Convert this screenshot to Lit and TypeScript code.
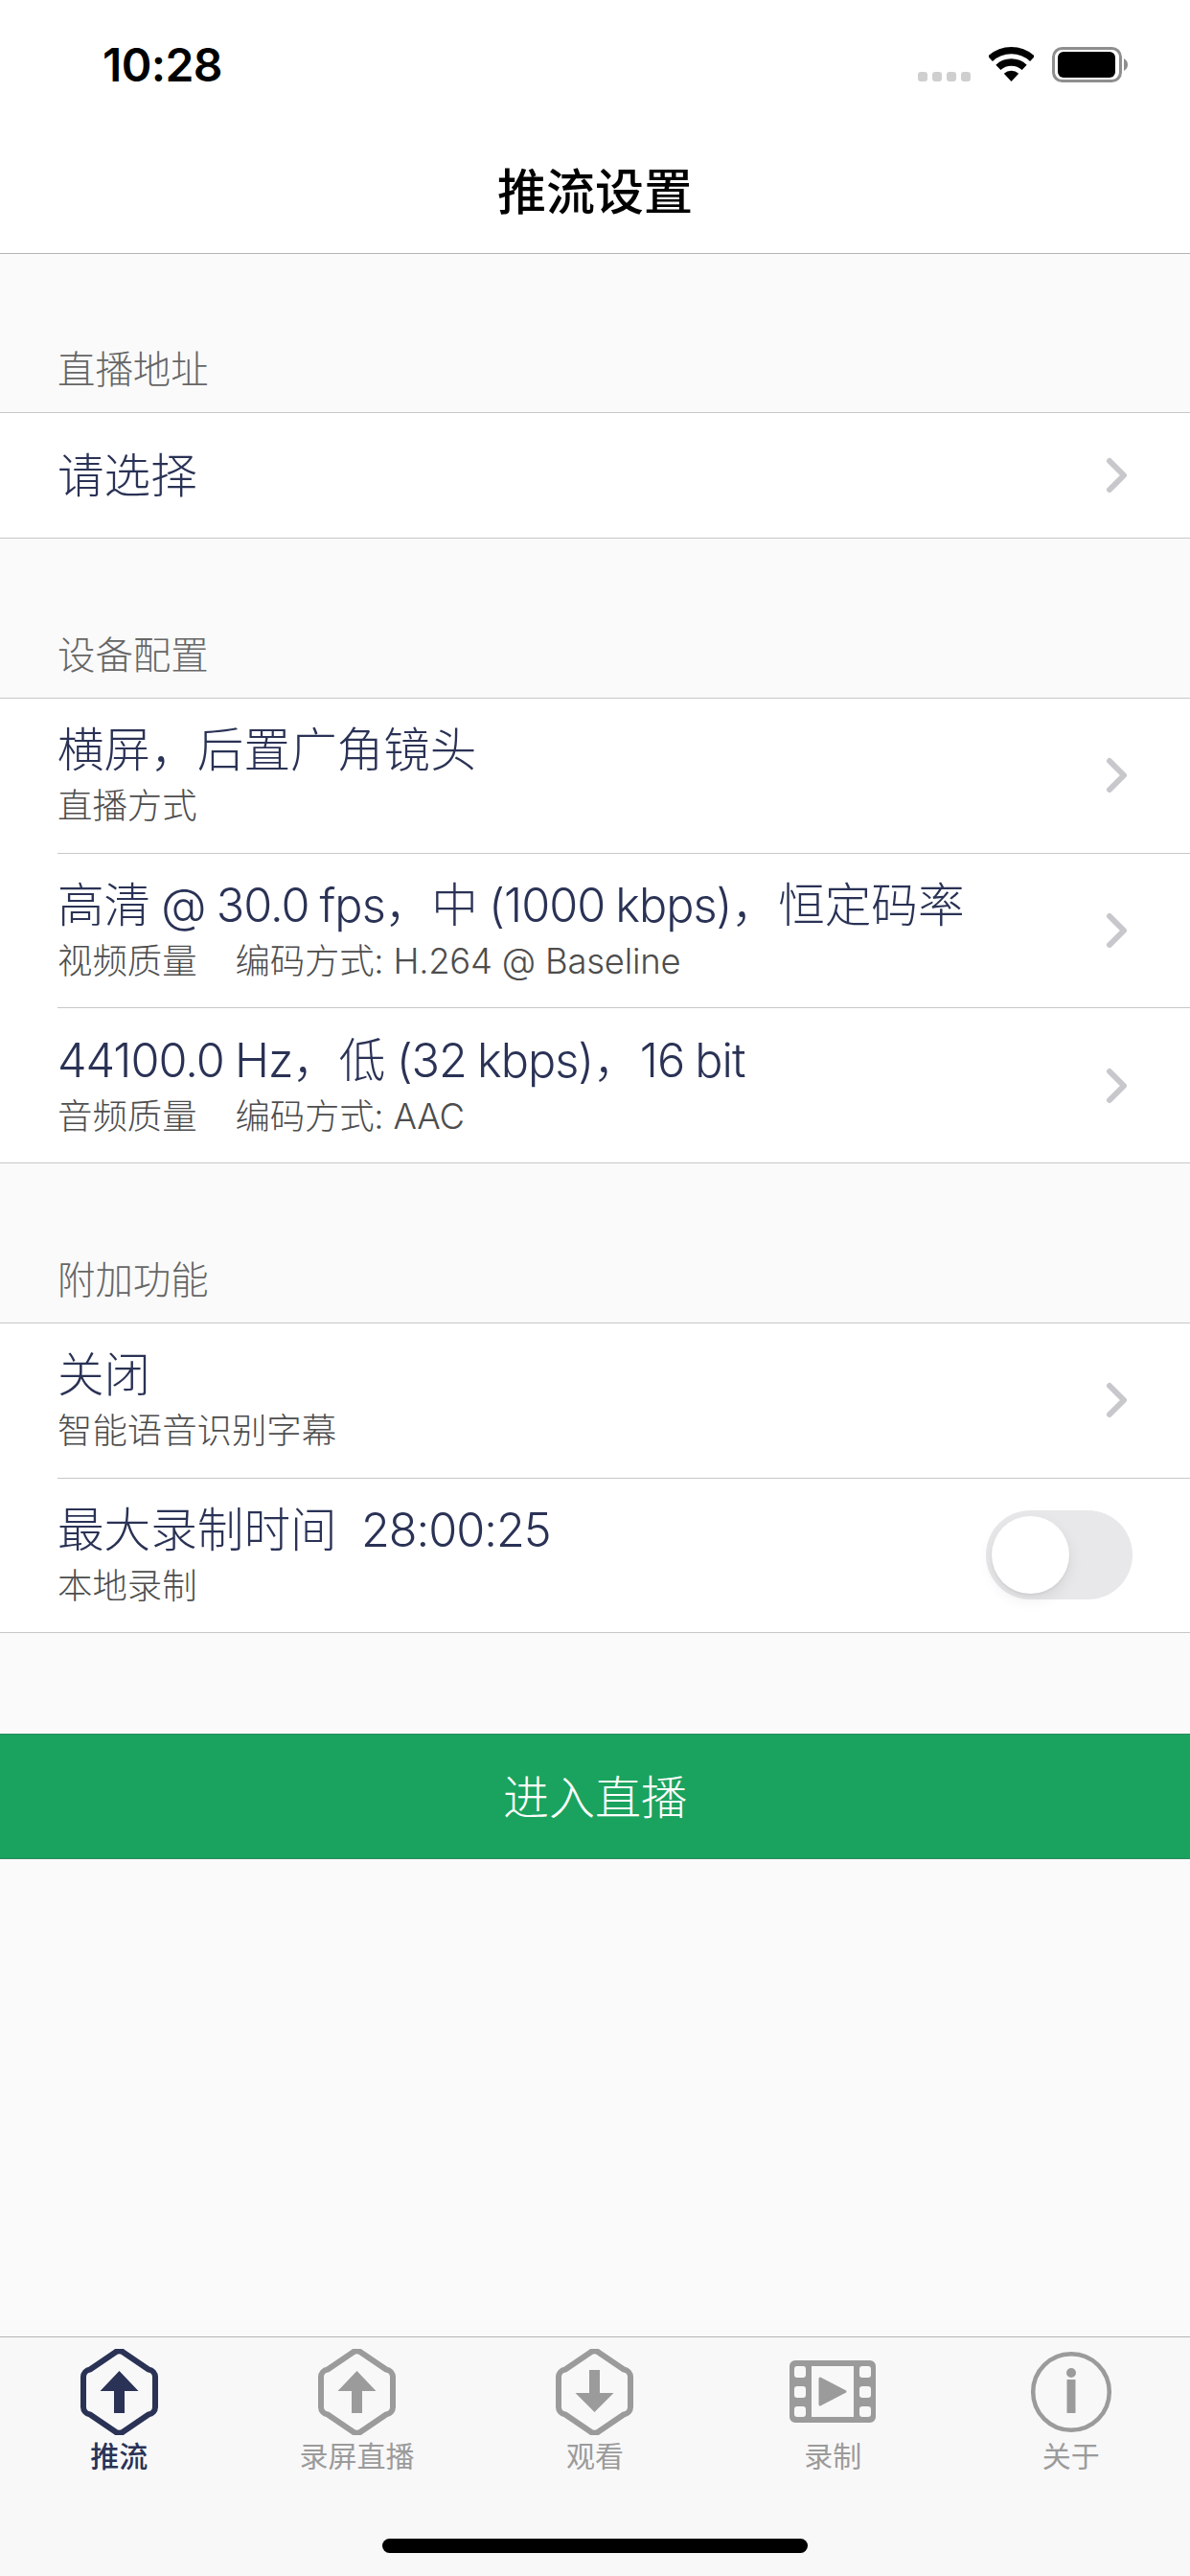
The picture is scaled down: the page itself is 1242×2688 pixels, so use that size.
import { LitElement, html, css, svg } from "lit";
import { customElement } from "lit/decorators.js";

const chevron = html`<svg class="chev" viewBox="0 0 24 38"><path d="M4 4 L19 19 L4 34" fill="none" stroke="#c7c7cc" stroke-width="6" stroke-linecap="round" stroke-linejoin="round"/></svg>`;

const hex = svg`<path d="M36.5 3.4 a8 8 0 0 1 8 0 L71 21.5 a8 8 0 0 1 7 8 V60.5 a8 8 0 0 1-7 8 L44.5 86.6 a8 8 0 0 1-8 0 L10 68.5 a8 8 0 0 1-7-8 V29.5 a8 8 0 0 1 7-8 Z" fill="none" stroke="currentColor" stroke-width="6" stroke-linejoin="round"/>`;

const icons = {
  up: html`<svg class="ico" width="81" height="90" viewBox="0 0 81 90">${hex}<path d="M40.5 23 L60.5 44 H46 V67 H35 V44 H20.5 Z" fill="currentColor"/></svg>`,
  down: html`<svg class="ico" width="81" height="90" viewBox="0 0 81 90">${hex}<path d="M35 22 H46 V46 H60.5 L40.5 66 L20.5 46 H35 Z" fill="currentColor"/></svg>`,
  film: html`<svg class="ico" width="90" height="90" viewBox="0 0 90 90"><path fill-rule="evenodd" fill="currentColor" d="M6 12 H84 a6 6 0 0 1 6 6 V71 a6 6 0 0 1-6 6 H6 a6 6 0 0 1-6-6 V18 a6 6 0 0 1 6-6 Z M8 18 a3 3 0 0 0-3 3 V27 a3 3 0 0 0 3 3 H14 a3 3 0 0 0 3-3 V21 a3 3 0 0 0-3-3 Z M8 39 a3 3 0 0 0-3 3 V48 a3 3 0 0 0 3 3 H14 a3 3 0 0 0 3-3 V42 a3 3 0 0 0-3-3 Z M8 60 a3 3 0 0 0-3 3 V68 a3 3 0 0 0 3 3 H14 a3 3 0 0 0 3-3 V63 a3 3 0 0 0-3-3 Z M76 18 a3 3 0 0 0-3 3 V27 a3 3 0 0 0 3 3 H82 a3 3 0 0 0 3-3 V21 a3 3 0 0 0-3-3 Z M76 39 a3 3 0 0 0-3 3 V48 a3 3 0 0 0 3 3 H82 a3 3 0 0 0 3-3 V42 a3 3 0 0 0-3-3 Z M76 60 a3 3 0 0 0-3 3 V68 a3 3 0 0 0 3 3 H82 a3 3 0 0 0 3-3 V63 a3 3 0 0 0-3-3 Z M23 18 V71 H67 V18 Z"/><path d="M32 31 L58 44.5 L32 58 Z" fill="currentColor" stroke="currentColor" stroke-width="3" stroke-linejoin="round"/></svg>`,
  info: html`<svg class="ico" width="90" height="90" viewBox="0 0 90 90"><circle cx="45" cy="45" r="39.8" fill="none" stroke="currentColor" stroke-width="4.5"/><circle cx="45" cy="25" r="5" fill="currentColor"/><rect x="40.5" y="32" width="9" height="35" fill="currentColor"/></svg>`,
};

interface Row { title: string; sub?: string; codec?: string; toggle?: boolean }
const sections: { head: string; rows: Row[] }[] = [
  { head: "直播地址", rows: [{ title: "请选择" }] },
  { head: "设备配置", rows: [
    { title: "横屏，后置广角镜头", sub: "直播方式" },
    { title: "高清 @ 30.0 fps，中 (1000 kbps)，恒定码率", sub: "视频质量", codec: "编码方式: H.264 @ Baseline" },
    { title: "44100.0 Hz，低 (32 kbps)，16 bit", sub: "音频质量", codec: "编码方式: AAC" },
  ]},
  { head: "附加功能", rows: [
    { title: "关闭", sub: "智能语音识别字幕" },
    { title: "最大录制时间  28:00:25", sub: "本地录制", toggle: true },
  ]},
];
const tabs = [
  { label: "推流", icon: icons.up, active: true },
  { label: "录屏直播", icon: icons.up },
  { label: "观看", icon: icons.down },
  { label: "录制", icon: icons.film },
  { label: "关于", icon: icons.info },
];

const tracked = (text: string) =>
  text.split(/([\x00-\x7f]+)/).map((part, i) => (i % 2 ? html`<span class="latin">${part}</span>` : part));

@customElement("app-root")
export class AppRoot extends LitElement {
  static styles = css`
    :host { display: flex; flex-direction: column; width: 1242px; height: 2688px; background: #fafafa; overflow: hidden;
      font-family: "Inter", "Noto Sans CJK SC", sans-serif; color: #2a3255; }
    .top { background: #fff; border-bottom: 1px solid #b4b4b4; height: 265px; box-sizing: border-box; display: flex; flex-direction: column; }
    .status { height: 134px; flex: none; display: flex; align-items: center; padding: 0 65px 0 107px; box-sizing: border-box; color: #000; }
    .time { font-size: 48px; font-weight: 600; flex: 1; letter-spacing: -0.6px; }
    .dots { display: flex; gap: 5px; margin: 26px 19px 0 0; }
    .dots i { width: 10px; height: 10px; border-radius: 3px; background: #cfcfcf; }
    .wifi { margin-right: 19px; display: block; }
    .title { flex: 1; display: flex; align-items: center; justify-content: center; font-size: 51px; font-weight: 500; color: #000; font-family: "Noto Sans CJK SC", sans-serif; padding-bottom: 4px; }
    .head { height: 96px; box-sizing: border-box; margin-top: 71px; padding: 0 0 0 60px; display: flex; align-items: center; font-size: 39.4px; font-weight: 300; color: #666; border-bottom: 1px solid #c8c8c8; }
    .top + .head { margin-top: 70px; }
    .sec { background: #fff; border-bottom: 1px solid #c8c8c8; }
    .row { display: flex; align-items: center; padding: 0 49px 0 60px; height: 160.67px; box-sizing: border-box; }
    .row.single { height: 130px; }
    .sep { height: 1px; background: #c8c8c8; margin-left: 60px; }
    .txt { flex: 1; min-width: 0; padding-bottom: 2px; }
    .single .txt { padding: 2px 0 0; }
    .t { font-size: 48.6px; font-weight: 300; line-height: 62px; white-space: pre; }
    .latin { letter-spacing: -1px; word-spacing: -1.5px; }
    .plain .latin { word-spacing: 0; }
    .s { font-size: 36.4px; font-weight: 300; line-height: 46px; color: #4d4d4d; margin-top: 4px; white-space: pre; }
    .codec { margin-left: 40px; letter-spacing: -0.2px; }
    .chev { width: 24px; height: 38px; display: block; margin-right: 15px; }
    .toggle { width: 153px; height: 93px; margin-right: 11px; border-radius: 47px; background: #e8e8ea; position: relative; }
    .toggle i { position: absolute; left: 6px; top: 6px; width: 81px; height: 81px; border-radius: 50%; background: #fff; box-shadow: 0 6px 16px rgba(0,0,0,.08), 0 2px 3px rgba(0,0,0,.05); }
    .btn { margin-top: 105px; height: 131px; background: #1aa35e; border-top: 1px solid #2b8a62; border-bottom: 1px solid #2b8a62; color: #fff; font-size: 48px; font-weight: 300; display: flex; align-items: center; justify-content: center; padding-bottom: 5px; box-sizing: border-box; }
    .spacer { flex: 1; }
    .tabbar { height: 250px; box-sizing: border-box; background: #f8f8f9; border-top: 1px solid #b4b4b4; position: relative; display: grid; grid-template-columns: repeat(5, 248.4px); padding-top: 12px; align-content: start; }
    .tab { display: flex; flex-direction: column; align-items: center; color: #9b9b9b; font-size: 30px; line-height: 40px; }
    .tab.on { color: #2a3255; font-weight: 500; }
    .ico { display: block; }
    .lab { font-family: "Noto Sans CJK SC", sans-serif; }
    .home { position: absolute; left: 399px; top: 210px; width: 444px; height: 15px; border-radius: 8px; background: #000; }
  `;
  render() {
    return html`
      <div class="top">
        <div class="status">
          <div class="time">10:28</div>
          <div class="dots"><i></i><i></i><i></i><i></i></div>
          <svg class="wifi" width="47" height="36" viewBox="0 0 47 36">
            <path d="M1.44 12.35 A32.35 32.35 0 0 1 45.56 12.35" fill="none" stroke="#000" stroke-width="7.3"/>
            <path d="M9.86 21.38 A20 20 0 0 1 37.14 21.38" fill="none" stroke="#000" stroke-width="7.4"/>
            <path d="M23.5 36 L15.8 27.74 A11.3 11.3 0 0 1 31.2 27.74 Z" fill="#000"/>
          </svg>
          <svg width="79" height="37" viewBox="0 0 79 37"><rect x="1.5" y="1.5" width="70" height="34" rx="9" fill="none" stroke="#8e8e8e" stroke-width="3"/><rect x="6" y="5" width="60" height="27" rx="6" fill="#000"/><path d="M75 12 C78 14 79 16 79 18.5 C79 21 78 23 75 25 Z" fill="#8e8e8e"/></svg>
        </div>
        <div class="title">推流设置</div>
      </div>
      ${sections.map((s) => html`
        <div class="head">${s.head}</div>
        <div class="sec">
          ${s.rows.map((r, i) => html`
            ${i > 0 ? html`<div class="sep"></div>` : ""}
            <div class="row ${r.sub ? "" : "single"}">
              <div class="txt"><div class="t ${r.toggle ? "plain" : ""}">${tracked(r.title)}</div>${r.sub ? html`<div class="s">${r.sub}${r.codec ? html`<span class="codec">${r.codec}</span>` : ""}</div>` : ""}</div>
              ${r.toggle ? html`<div class="toggle"><i></i></div>` : chevron}
            </div>`)}
        </div>`)}
      <div class="btn">进入直播</div>
      <div class="spacer"></div>
      <div class="tabbar">
        ${tabs.map((t) => html`<div class="tab ${t.active ? "on" : ""}">${t.icon}<div class="lab">${t.label}</div></div>`)}
        <div class="home"></div>
      </div>`;
  }
}
